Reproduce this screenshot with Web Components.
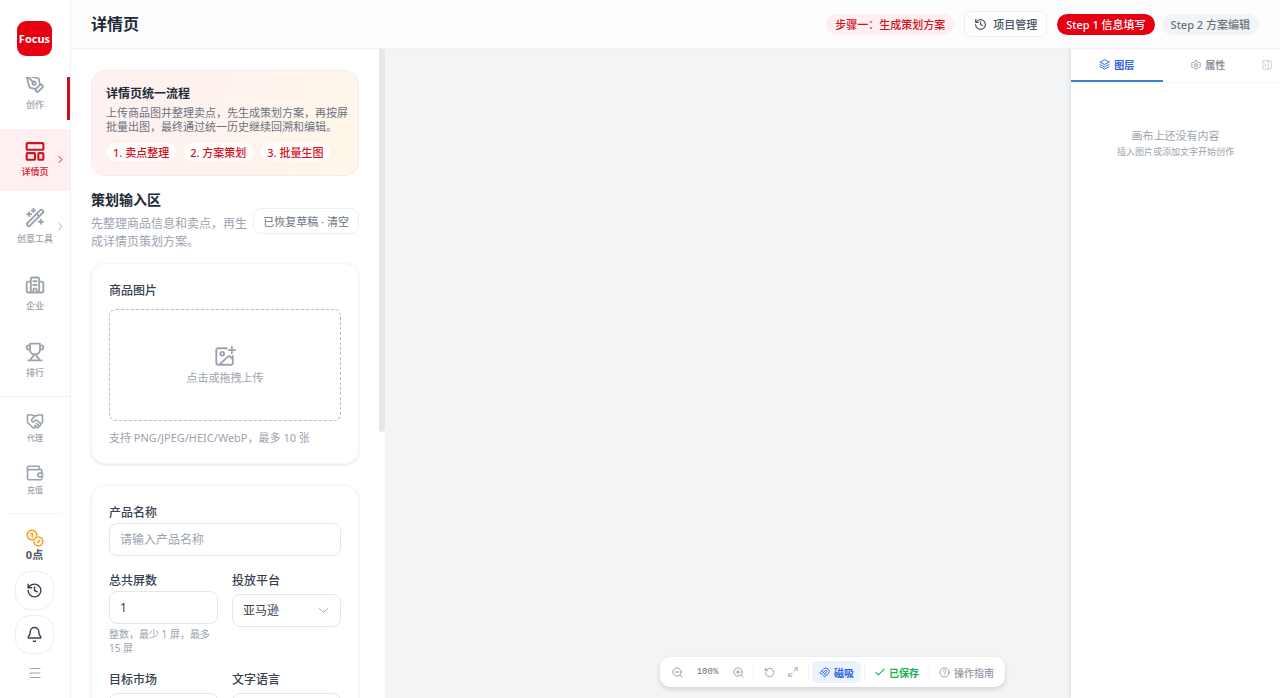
<!DOCTYPE html>
<html lang="zh-CN">
<head>
<meta charset="utf-8">
<meta name="viewport" content="width=device-width, initial-scale=1">
<title>详情页</title>
<style>
html, body { margin: 0; height: 100%; }
body { font-family: "Noto Sans", "Noto Sans CJK SC", sans-serif; font-size: 11px; color: #1f2937; background: #fff; overflow: hidden; }
</style>
</head>
<body>
<focus-app></focus-app>
<script>
const ICONS = {
  pen: '<path d="M15.7 21.3a1 1 0 0 1-1.4 0l-1.6-1.6a1 1 0 0 1 0-1.4l5.6-5.6a1 1 0 0 1 1.4 0l1.6 1.6a1 1 0 0 1 0 1.4z"/><path d="m18 13-1.4-6.9a1 1 0 0 0-.7-.8L3.2 2a1 1 0 0 0-1.2 1.2l3.3 12.7a1 1 0 0 0 .8.7L13 18"/><path d="m2.3 2.3 7.3 7.3"/><circle cx="11" cy="11" r="2"/>',
  layout: '<rect x="2" y="2.5" width="20" height="8" rx="1"/><rect x="2" y="14.5" width="10" height="8" rx="1"/><rect x="16" y="14.5" width="6" height="8" rx="1"/>',
  wand: '<path d="m21.6 3.6-1.3-1.3a1.2 1.2 0 0 0-1.7 0L2.4 18.6a1.2 1.2 0 0 0 0 1.7l1.3 1.3a1.2 1.2 0 0 0 1.7 0L21.6 5.4a1.2 1.2 0 0 0 0-1.8"/><path d="m14 7 3 3M5 5v5M19 14v5M10 1v4M7.500 7.500h-5M21.500 16.500h-5M12 3H8"/>',
  building: '<path d="M7 21V5a2 2 0 0 1 2-2h6a2 2 0 0 1 2 2v16M7 8H4a2 2 0 0 0-2 2v9a2 2 0 0 0 2 2h16a2 2 0 0 0 2-2v-9a2 2 0 0 0-2-2h-3M10 7.500h4M10 12h4M10 21v-3a2 2 0 0 1 4 0v3"/>',
  trophy: '<path d="M6 9H4.500a2.500 2.500 0 0 1 0-5H6M18 9h1.500a2.500 2.500 0 0 0 0-5H18M4 22h16M10 14.660V17c0 .550-.470.980-.970 1.210C7.850 18.750 7 20.240 7 22M14 14.660V17c0 .550.470.980.970 1.210C16.150 18.750 17 20.240 17 22M18 2H6v7a6 6 0 0 0 12 0z"/>',
  handshake: '<path d="M2 4h5.500L12 5.500 16.500 4H22v10l-3 1.500M2 4v10l7.500 7a2 2 0 0 0 3-2M12 5.500 8 9.500a2 2 0 0 0 3 2.800l2-1.300h1.500l5 4.500a1.800 1.800 0 0 1-2.500 2.500l-3-2.500M17 18a1.800 1.800 0 0 1-3 2l-2.500-2"/>',
  wallet: '<path d="M18 7V4.500A1.500 1.500 0 0 0 16.500 3H4a2 2 0 0 0 0 4.500h15.500A1.500 1.500 0 0 1 21 9v3M2 5v14a2 2 0 0 0 2 2h15.500a1.500 1.500 0 0 0 1.500-1.500V17M22 12.200h-4a2.300 2.300 0 0 0 0 4.600h4z"/>',
  coins: '<circle cx="16.500" cy="16.500" r="6" fill="#fdf3dc"/><circle cx="8" cy="8" r="7.500" fill="#fff" stroke="#fff"/><circle cx="8" cy="8" r="6.500" fill="#fdf3dc"/><path d="M7 6h1.500v4.500M15.500 18l2.500-2.500"/>',
  history: '<path d="M3 12a9 9 0 1 0 9-9 9.750 9.750 0 0 0-6.740 2.740L3 8M3 3v5h5M12 7v5l4 2"/>',
  bell: '<path d="M10.500 21.200a2 2 0 0 0 3 0M3.300 15.300A1 1 0 0 0 4 17h16a1 1 0 0 0 .740-1.670C19.400 13.960 18 12.500 18 8A6 6 0 0 0 6 8c0 4.500-1.400 5.960-2.700 7.300"/>',
  menu: '<path d="M2 3h20M2 12h20M2 21h20"/>',
  right: '<path d="m8 4 8 8-8 8"/>',
  down: '<path d="m3 8 9 8 9-8"/>',
  image: '<path d="M14 3.500H4.500a2 2 0 0 0-2 2v14a2 2 0 0 0 2 2h14a2 2 0 0 0 2-2V12M16 5.500h7M19.500 2v7M6 21.500l9.500-9a1.500 1.500 0 0 1 2 0l3 3"/><circle cx="9" cy="9.500" r="2"/>',
  layers: '<path d="M12 2 2 7l10 5 10-5zM2 12l10 5 10-5M2 17l10 5 10-5"/>',
  gear: '<path d="m10 2-1 3-3 1.500-3-.700-2 3.500 2 2.700-2 2.700 2 3.500 3-.700L9 19l1 3h4l1-3 3-1.500 3 .700 2-3.500-2-2.700 2-2.700-2-3.500-3 .700L15 5l-1-3z"/><circle cx="12" cy="12" r="3.500"/>',
  panel: '<rect x="2" y="2" width="20" height="20" rx="1"/><path d="M15 2v20M7 9l3 3-3 3"/>',
  zoomout: '<circle cx="11" cy="11" r="9"/><path d="m22 22-4.500-4.500M7 11h8"/>',
  zoomin: '<circle cx="11" cy="11" r="9"/><path d="m22 22-4.500-4.500M7 11h8M11 7v8"/>',
  reset: '<path d="M3 12a9 9 0 1 0 9-9 9.750 9.750 0 0 0-6.740 2.740L3 8M3 3v5h5"/>',
  expand: '<path d="M15 2h7v7M22 2l-8 8M9 22H2v-7M2 22l8-8"/>',
  magnet: '<path d="M2.500 12 10 4.500a7 7 0 0 1 10 10L12.500 22l-3.500-3.500 7.500-7.500a2 2 0 0 0-3-3L6 15.500zM6.500 8.500l3.500 3.500M13 14.500l3.500 3.500"/>',
  check: '<path d="m2 13 6 6L22 5"/>',
  help: '<circle cx="12" cy="12" r="10"/><path d="M9 9a3 3 0 0 1 5.900 1c0 2-2.900 2.500-2.900 4M12 17.500v.200"/>'
};

const define = (name, template) => customElements.define(name, class extends HTMLElement {
  connectedCallback() {
    if (this.shadowRoot) return;
    const root = this.attachShadow({ mode: 'open' });
    root.innerHTML = '<style>*{box-sizing:border-box}button,input,select{font:inherit;color:inherit;margin:0}button{cursor:pointer}</style>' + template(this);
  }
});
const attr = (el, name, fallback = '') => el.getAttribute(name) || fallback;

define('ui-icon', el => `
  <style>:host{display:block;flex:none;width:${attr(el, 'size', '16')}px;height:${attr(el, 'size', '16')}px}svg{display:block;width:100%;height:100%}</style>
  <svg viewBox="0 0 24 24" fill="none" stroke="currentColor" stroke-width="${attr(el, 'weight', '2')}" stroke-linecap="round" stroke-linejoin="round" aria-hidden="true">${ICONS[attr(el, 'name')]}</svg>`);

define('nav-item', el => `
  <style>
    :host{display:block;color:#9ca3af;font-size:9px;font-weight:500}
    a{position:relative;display:flex;flex-direction:column;align-items:center;justify-content:center;gap:4px;height:62px;color:inherit;text-decoration:none;line-height:14px}
    :host([active]){color:#d2121f;background:#fef0f0}
    :host([marked]) a::after{content:"";position:absolute;right:0;top:0;bottom:4px;width:3px;background:#c8101e}
    :host([small]){font-size:8px}
    :host([small]) a{height:52px;gap:2px;line-height:12px}
    .more{position:absolute;right:5px;top:26px}
  </style>
  <a href="#"><ui-icon name="${attr(el, 'icon')}" weight="${el.hasAttribute('active') ? '2.5' : '2.2'}" size="${el.hasAttribute('small') ? 18 : 20}"></ui-icon><slot></slot>${el.hasAttribute('more') ? '<ui-icon class="more" name="right" size="9" weight="2.5"></ui-icon>' : ''}</a>`);

define('side-bar', () => `
  <style>
    :host{display:flex;flex-direction:column;width:71px;flex:none;border-right:1px solid #f0f1f3;background:#fff}
    .logo{display:flex;align-items:center;justify-content:center;width:35px;height:35px;margin:21px 0 21px 17px;border-radius:9px;background:#e60012;color:#fff;font-size:11px;font-weight:700;text-decoration:none;flex:none}
    nav{overflow:hidden;flex:none}
    .list{display:flex;flex-direction:column;gap:5px;margin-top:-15px}
    .second{border-top:1px solid #f0f1f3;margin-top:4px;padding-top:5px}
    .foot{display:flex;flex-direction:column;align-items:center;gap:5px;margin:7px 9px 0 8px;border-top:1px solid #f3f4f6;padding-top:15px}
    .points{display:flex;flex-direction:column;align-items:center;font-weight:700;line-height:16px;color:#4b5563;margin-bottom:3px}
    .points ui-icon{color:#f0a12e}
    .round{display:grid;place-items:center;width:39px;height:39px;border:1px solid #eceef1;border-radius:15px;background:#fff;color:#374151;padding:0}
    .menu{border:0;background:none;padding:0;margin-top:8px;color:#9ca3af}
  </style>
  <a class="logo" href="#">Focus</a>
  <nav><div class="list">
    <nav-item icon="pen" marked>创作</nav-item>
    <nav-item icon="layout" active more>详情页</nav-item>
    <nav-item icon="wand" more>创意工具</nav-item>
    <nav-item icon="building">企业</nav-item>
    <nav-item icon="trophy">排行</nav-item>
  </div></nav>
  <nav class="second">
    <nav-item icon="handshake" small>代理</nav-item>
    <nav-item icon="wallet" small>充值</nav-item>
  </nav>
  <div class="foot">
    <div class="points"><ui-icon name="coins" size="18"></ui-icon>0点</div>
    <button class="round" aria-label="历史"><ui-icon name="history" size="17"></ui-icon></button>
    <button class="round" aria-label="通知"><ui-icon name="bell" size="17"></ui-icon></button>
    <button class="menu" aria-label="菜单"><ui-icon name="menu" size="12"></ui-icon></button>
  </div>`);

define('tag-pill', () => `
  <style>
    :host{display:inline-flex;align-items:center;height:21px;padding:0 9px;border-radius:11px;background:#f3f4f6;color:#6b7280;white-space:nowrap;font-weight:500}
    :host([tone=soft]){background:#fef0f0;color:#d2121f}
    :host([tone=solid]){background:#e60012;color:#fff}
    :host([tone=white]){height:18px;padding:0 7px;background:#fffc;color:#d2121f}
  </style><slot></slot>`);

define('page-header', () => `
  <style>
    :host{display:flex;align-items:center;height:49px;flex:none;padding:0 21px 0 20px;border-bottom:1px solid #f0f1f3;background:#fdfdfe}
    h1{margin:0 auto 0 0;font-size:16px;line-height:24px;font-weight:700}
    button{display:flex;align-items:center;gap:6px;height:26px;padding:0 9px;margin:0 10px;border:1px solid #eceef1;border-radius:8px;background:#fff;color:#4b5563;font-weight:500}
    .steps{display:flex;gap:7px}
  </style>
  <h1>详情页</h1>
  <tag-pill tone="soft">步骤一：生成策划方案</tag-pill>
  <button><ui-icon name="history" size="13" weight="2.2"></ui-icon>项目管理</button>
  <div class="steps"><tag-pill tone="solid">Step 1 信息填写</tag-pill><tag-pill>Step 2 方案编辑</tag-pill></div>`);

define('intro-card', () => `
  <style>
    :host{display:block;padding:14px 8px 14px 14px;border:1px solid #fbe9e7;border-radius:14px;background:linear-gradient(105deg,#fef1f2,#fef3ee 50%,#fff7e9)}
    h2{margin:0;font-size:12px;line-height:18px;font-weight:700}
    p{margin:3px 0 9px;line-height:14px;color:#6b7280}
    div{display:flex;gap:7px}
  </style>
  <h2>详情页统一流程</h2>
  <p>上传商品图并整理卖点，先生成策划方案，再按屏批量出图，最终通过统一历史继续回溯和编辑。</p>
  <div><tag-pill tone="white">1. 卖点整理</tag-pill><tag-pill tone="white">2. 方案策划</tag-pill><tag-pill tone="white">3. 批量生图</tag-pill></div>`);

define('section-head', () => `
  <style>
    :host{display:flex;align-items:center;justify-content:space-between}
    h2{margin:0 0 5px;font-size:14px;line-height:20px;font-weight:700}
    p{margin:0;font-size:12px;line-height:18px;color:#9ca3af}
    button{flex:none;height:26px;padding:0 9px;border:1px solid #eceef1;border-radius:8px;background:#fff;color:#6b7280;white-space:nowrap}
  </style>
  <div><h2>策划输入区</h2><p>先整理商品信息和卖点，再生成详情页策划方案。</p></div>
  <button>已恢复草稿 · 清空</button>`);

define('form-card', () => `
  <style>:host{display:block;padding:17px;border:1px solid #f5f6f7;border-radius:14px;background:#fff;box-shadow:0 1px 3px #0000001a}</style><slot></slot>`);

define('upload-box', () => `
  <style>
    :host{display:block}
    h3{margin:0;font-size:12px;line-height:20px;font-weight:500;color:#374151}
    button{display:flex;flex-direction:column;align-items:center;justify-content:center;gap:2px;width:100%;height:112px;margin:8px 0 9px;padding:2px 0 0;border:1px dashed #b9bfc8;border-radius:7px;background:none;color:#9ca3af;line-height:18px}
    p{margin:0;line-height:16px;color:#9ca3af}
  </style>
  <h3>商品图片</h3>
  <button><ui-icon name="image" size="22"></ui-icon>点击或拖拽上传</button>
  <p>支持 PNG/JPEG/HEIC/WebP，最多 10 张</p>`);

define('form-field', el => {
  const options = attr(el, 'options');
  return `
  <style>
    :host{display:block;min-width:0}
    label{display:block;font-size:12px;line-height:20px;font-weight:500;color:#374151}
    .box{position:relative}
    :host([options]) .box{margin-top:3px}
    input,select{display:block;width:100%;height:33px;padding:0 10px;border:1px solid #e5e7eb;border-radius:8px;background:#fff;font-size:12px;color:#374151;appearance:none;outline:0}
    input::placeholder{color:#9ca3af}
    ui-icon{position:absolute;right:12px;top:11px;color:#9ca3af;pointer-events:none}
    p{margin:3px 0 1px;font-size:10px;line-height:14px;color:#9ca3af}
  </style>
  <label for="control">${attr(el, 'label')}</label>
  <div class="box">${options
    ? `<select id="control">${options.split(',').map(o => `<option>${o}</option>`).join('')}</select><ui-icon name="down" size="11"></ui-icon>`
    : `<input id="control" type="text" value="${attr(el, 'value')}" placeholder="${attr(el, 'placeholder')}">`}</div>
  ${el.hasAttribute('hint') ? `<p>${attr(el, 'hint')}</p>` : ''}`;
});

define('input-panel', () => `
  <style>
    :host{position:relative;display:block;width:314px;flex:none;background:#fff;min-height:0}
    .scroll{display:flex;flex-direction:column;height:100%;overflow-y:auto;scrollbar-width:none;padding:21px 26px 20px 20px}
    .scroll>*{flex:none}
    section-head{margin:14px 0 12px}
    .fields{margin-top:21px}
    .grid{display:grid;grid-template-columns:1fr 1fr;column-gap:14px;row-gap:14px;margin-top:15px}
    .thumb{position:absolute;right:0;top:0;width:6px;height:59%;border-radius:0 0 3px 3px;background:#e5e7eb}
  </style>
  <div class="scroll">
    <intro-card></intro-card>
    <section-head></section-head>
    <form-card><upload-box></upload-box></form-card>
    <form-card class="fields">
      <form-field label="产品名称" placeholder="请输入产品名称"></form-field>
      <div class="grid">
        <form-field label="总共屏数" value="1" hint="整数，最少 1 屏，最多 15 屏"></form-field>
        <form-field label="投放平台" options="亚马逊"></form-field>
        <form-field label="目标市场" options=" "></form-field>
        <form-field label="文字语言" options=" "></form-field>
      </div>
    </form-card>
  </div>
  <div class="thumb"></div>`);

define('layer-panel', () => `
  <style>
    :host{display:block;width:209px;background:#fff;box-shadow:-1px 0 4px #0000001a}
    .tabs{display:flex;height:34px;border-bottom:1px solid #f5f6f7}
    .tabs button{display:flex;align-items:center;justify-content:center;gap:4px;padding:0;border:0;border-bottom:2px solid transparent;background:none;color:#8b93a1;font-size:10px;font-weight:600}
    .tabs .tab{flex:1}
    .tabs .on{color:#2b63e0;border-color:#3b82d0}
    .tabs .fold{width:26px;color:#c3c8d0}
    .empty{text-align:center;color:#9ca3af;padding-top:44px;line-height:17px}
    .empty p{margin:0}
    .empty .sub{font-size:9px;line-height:15px}
  </style>
  <div class="tabs">
    <button class="tab on"><ui-icon name="layers" size="11"></ui-icon>图层</button>
    <button class="tab"><ui-icon name="gear" size="10"></ui-icon>属性</button>
    <button class="fold" aria-label="收起"><ui-icon name="panel" size="10"></ui-icon></button>
  </div>
  <div class="empty"><p>画布上还没有内容</p><p class="sub">插入图片或添加文字开始创作</p></div>`);

define('canvas-toolbar', () => `
  <style>
    :host{display:flex;align-items:center;height:30px;padding:0 5px;border-radius:10px;background:#fff;color:#9299a5;font-size:10px;box-shadow:0 2px 5px #00000026;white-space:nowrap}
    button{display:flex;align-items:center;justify-content:center;gap:4px;height:22px;min-width:24px;padding:0;border:0;border-radius:6px;background:none;font-weight:500}
    output{width:37px;text-align:center;font:9px "Liberation Mono",monospace;color:#6b7280}
    i{width:1px;height:14px;margin:0 3px;background:#f0f1f3}
    .snap{padding:0 7px;background:#ebf3ff;color:#2b63e0;font-weight:600}
    .saved{padding:0 7px;color:#16b455;font-weight:600}
    .guide{padding:0 6px}
  </style>
  <button aria-label="缩小"><ui-icon name="zoomout" size="11"></ui-icon></button>
  <output>100%</output>
  <button aria-label="放大"><ui-icon name="zoomin" size="11"></ui-icon></button>
  <i></i>
  <button aria-label="重置"><ui-icon name="reset" size="11"></ui-icon></button>
  <button aria-label="适应窗口"><ui-icon name="expand" size="10"></ui-icon></button>
  <i></i>
  <button class="snap"><ui-icon name="magnet" size="11"></ui-icon>磁吸</button>
  <i></i>
  <button class="saved"><ui-icon name="check" size="10" weight="2.5"></ui-icon>已保存</button>
  <i></i>
  <button class="guide"><ui-icon name="help" size="11"></ui-icon>操作指南</button>`);

define('canvas-area', () => `
  <style>
    :host{position:relative;display:flex;justify-content:flex-end;flex:1;min-width:0;background:#f3f4f6;overflow:hidden}
    .dock{position:absolute;left:0;right:0;bottom:11px;display:flex;justify-content:center;pointer-events:none}
    canvas-toolbar{pointer-events:auto}
  </style>
  <layer-panel></layer-panel>
  <div class="dock"><canvas-toolbar></canvas-toolbar></div>`);

define('focus-app', () => `
  <style>
    :host{display:flex;height:100vh}
    main{display:flex;flex-direction:column;flex:1;min-width:0}
    .body{display:flex;flex:1;min-height:0}
  </style>
  <side-bar></side-bar>
  <main><page-header></page-header><div class="body"><input-panel></input-panel><canvas-area></canvas-area></div></main>`);
</script>
</body>
</html>
